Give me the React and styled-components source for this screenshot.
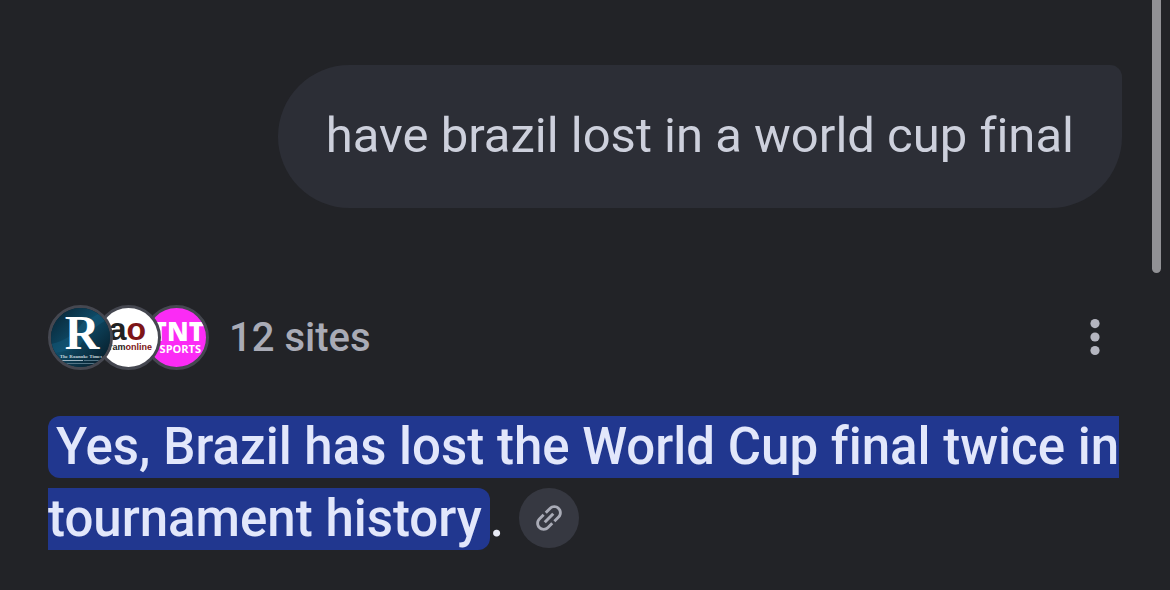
import React from 'react'
import styled, { createGlobalStyle } from 'styled-components'

const GlobalStyle = createGlobalStyle`
* {
    box-sizing: border-box;
}
body {
    margin: 0;
    background-color: #222327;
    font-family: Roboto, sans-serif;
    font-variant-ligatures: none;
}
`

const Page = styled.main`
padding: 65px 48px 0;
`

const ScrollThumb = styled.div`
position: fixed;
top: 0;
right: 9px;
width: 9px;
height: 273px;
border-radius: 0 0 5px 5px;
background-color: #919195;
`

const QueryRow = styled.div`
display: flex;
justify-content: flex-end;
`

const Query = styled.p`
margin: 0;
padding: 35px 48px 36px;
border-radius: 72px 12px 72px 72px;
background-color: #2c2e36;
color: #cdd0dc;
font-size: 49px;
line-height: 72px;
`

const SourceRow = styled.div`
display: flex;
align-items: center;
margin-top: 97px;
`

const Sources = styled.button`
display: flex;
align-items: center;
gap: 20px;
padding: 0;
border: none;
background: none;
color: #a9abb6;
font-family: inherit;
font-size: 40px;
font-weight: 500;
line-height: 48px;
`

const Logos = styled.span`
display: flex;
`

const Logo = styled.span`
position: relative;
z-index: ${props => props.$level};
display: flex;
width: 65px;
height: 65px;
margin-right: -17px;
border: 3px solid #454750;
border-radius: 50%;
background-color: ${props => props.$bg};
overflow: hidden;

&:last-child {
    margin-right: 0;
}

svg {
    width: 100%;
    height: 100%;
}
`

const MenuButton = styled.button`
display: flex;
justify-content: center;
width: 54px;
margin-left: auto;
padding: 0;
border: none;
background: none;
color: #b4b5bf;
`

const Answer = styled.p`
margin: 41px -4px 0 0;
color: #e8eaf6;
font-size: 51px;
font-weight: 500;
line-height: 72px;
`

const Highlight = styled.mark`
padding: 1px 8px 2px;
border-radius: 12px;
background-color: #21378f;
color: #e2e7fb;
`

const CiteButton = styled.button`
display: inline-flex;
align-items: center;
justify-content: center;
width: 60px;
height: 60px;
margin: 0 0 10px 15px;
padding: 0;
border: none;
border-radius: 50%;
background-color: #363841;
color: #a9abb6;
vertical-align: middle;
`

const RoanokeLogo = () => (
    <svg viewBox="0 0 59 59">
        <defs>
            <linearGradient id="roanoke" x1="0" y1="0" x2="1" y2="1">
                <stop offset="0" stopColor="#07202f" />
                <stop offset="0.45" stopColor="#0e4a66" />
                <stop offset="1" stopColor="#061620" />
            </linearGradient>
        </defs>
        <rect width="59" height="59" fill="url(#roanoke)" />
        <path d="M0 36 Q20 32 32 14 L59 0 V10 Q36 22 28 40 L0 46Z" fill="#14597a" opacity="0.5" />
        <text x="31" y="41" textAnchor="middle" fontFamily="Liberation Serif, serif" fontWeight="700" fontSize="48" fill="#fff">R</text>
        <text x="30" y="50" textAnchor="middle" fontFamily="Liberation Serif, serif" fontWeight="700" fontSize="5" fill="#c9d6de">The Roanoke Times</text>
        <path d="M11 52.500H32" stroke="#9fb4c0" strokeWidth="1" />
        <path d="M33 52.500H49M14 55.500H46" stroke="#547485" strokeWidth="1" />
    </svg>
)

const AhramLogo = () => (
    <svg viewBox="0 0 59 59">
        <g fontFamily="Liberation Sans, sans-serif" fontWeight="700" textAnchor="end">
            <text x="47" y="32" fontSize="32" fill="#222">a<tspan fill="#7d1518">o</tspan></text>
            <text x="53" y="42" fontSize="9" fill="#222">ahram<tspan fill="#7d1518">online</tspan></text>
        </g>
    </svg>
)

const TntLogo = () => (
    <svg viewBox="0 0 59 59">
        <g fill="#fff" fontFamily="Open Sans, sans-serif" textAnchor="end">
            <text x="57" y="33" fontWeight="800" fontSize="26">TNT</text>
            <text x="54" y="45" fontWeight="700" fontSize="11">SPORTS</text>
        </g>
    </svg>
)

const DotsIcon = () => (
    <svg width="10" height="38" viewBox="0 0 10 38" fill="currentColor">
        <circle cx="5" cy="4.600" r="4.600" />
        <circle cx="5" cy="18" r="4.600" />
        <circle cx="5" cy="31.500" r="4.600" />
    </svg>
)

const LinkIcon = () => (
    <svg width="36" height="36" viewBox="0 0 24 24" fill="currentColor">
        <path
            transform="rotate(-45 12 12)"
            d="M3.900 12c0-1.710 1.390-3.100 3.100-3.100h4V7H7c-2.760 0-5 2.240-5 5s2.240 5 5 5h4v-1.900H7c-1.710 0-3.100-1.390-3.100-3.100zM8 13h8v-2H8v2zm9-6h-4v1.900h4c1.710 0 3.100 1.390 3.100 3.100s-1.390 3.100-3.100 3.100h-4V17h4c2.760 0 5-2.240 5-5s-2.240-5-5-5z"
        />
    </svg>
)

const App = () => {
    return (
        <>
            <GlobalStyle />
            <ScrollThumb />
            <Page>
                <QueryRow>
                    <Query>have brazil lost in a world cup final</Query>
                </QueryRow>
                <SourceRow>
                    <Sources>
                        <Logos>
                            <Logo $level={3} $bg="#082230"><RoanokeLogo /></Logo>
                            <Logo $level={2} $bg="#fff"><AhramLogo /></Logo>
                            <Logo $level={1} $bg="#fb2bf5"><TntLogo /></Logo>
                        </Logos>
                        12 sites
                    </Sources>
                    <MenuButton aria-label="More options">
                        <DotsIcon />
                    </MenuButton>
                </SourceRow>
                <Answer>
                    <Highlight>Yes, Brazil has lost the World Cup final twice in tournament history</Highlight>.
                    <CiteButton aria-label="Show sources">
                        <LinkIcon />
                    </CiteButton>
                </Answer>
            </Page>
        </>
    )
}

export default App
